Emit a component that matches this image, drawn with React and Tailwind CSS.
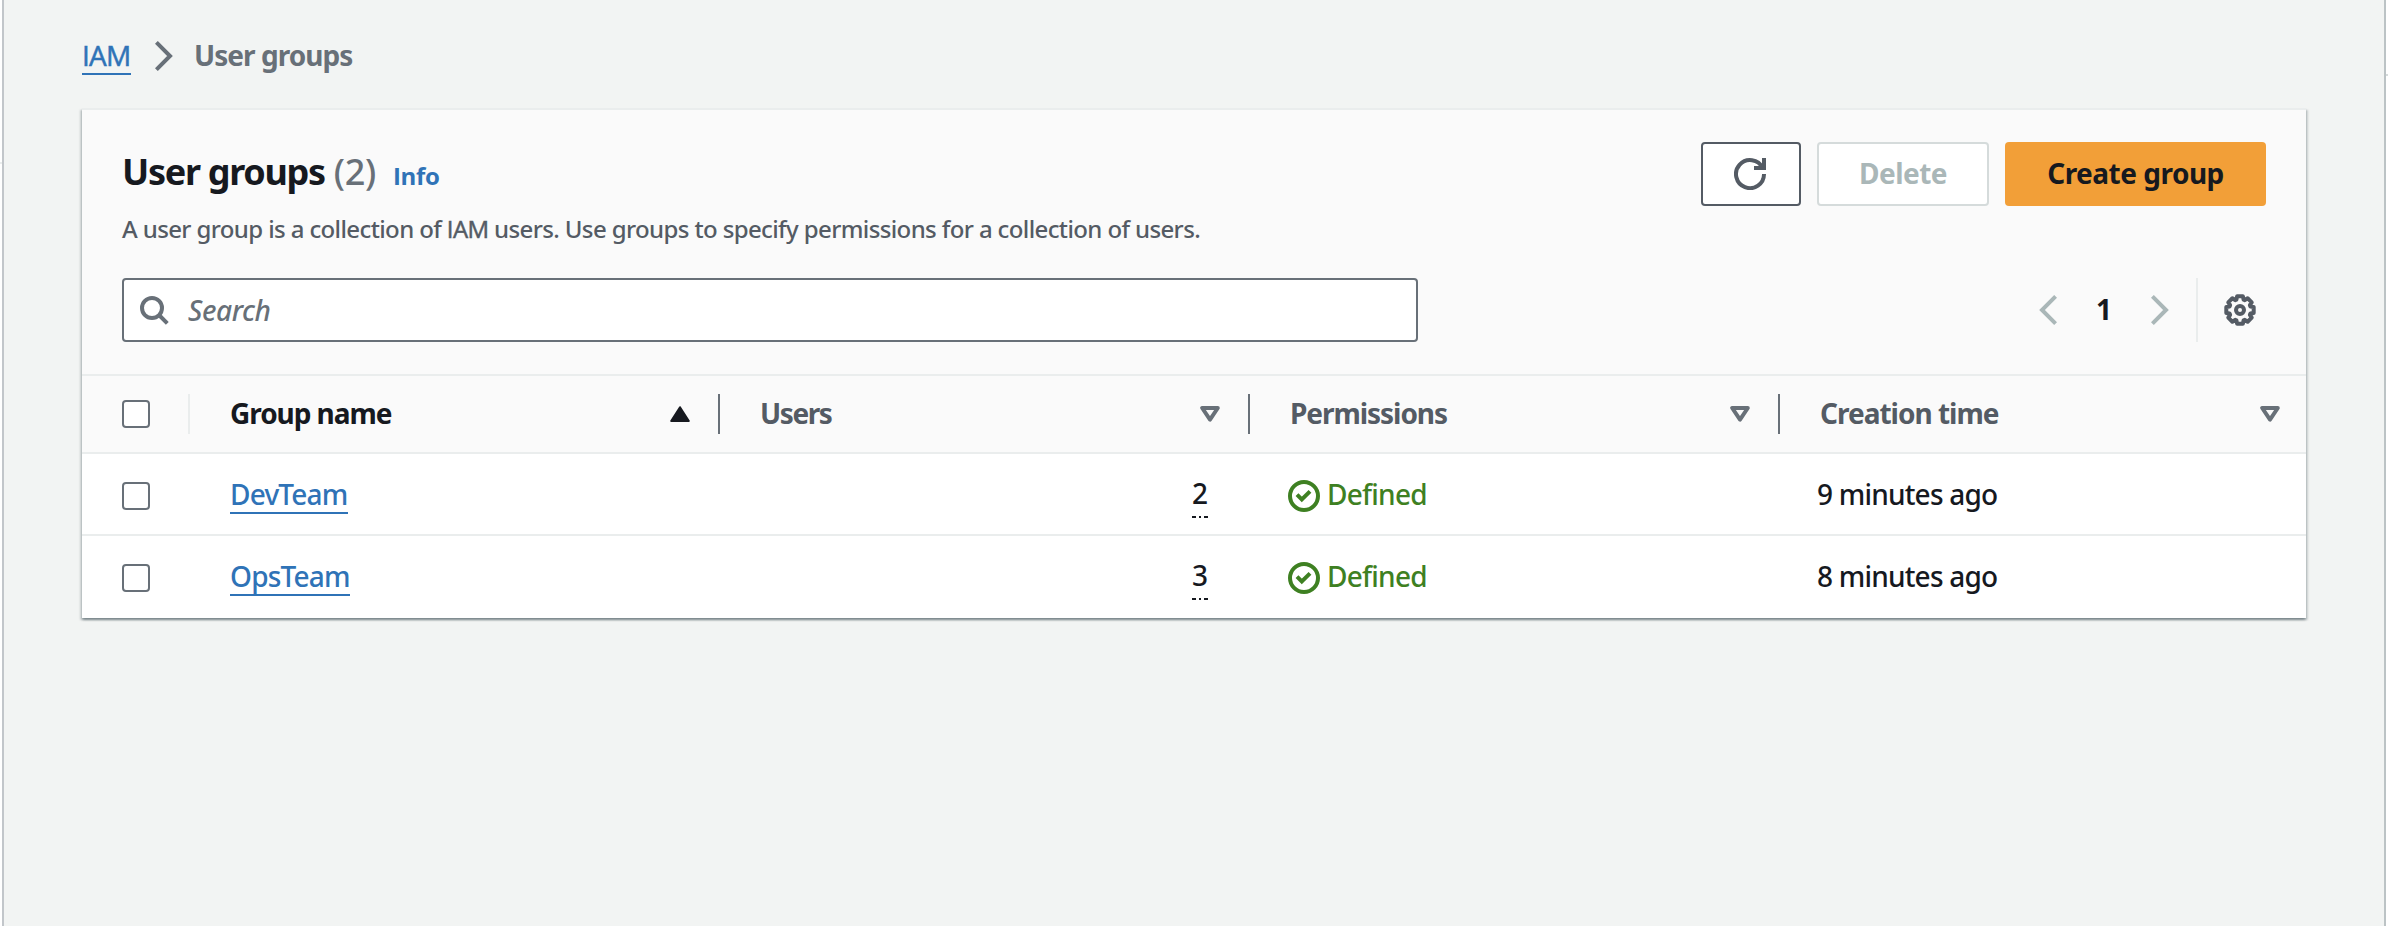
const columns = [
  { label: "Group name", sorted: true, track: "tracking-[-1.05px]" },
  { label: "Users", track: "tracking-[-1.4px]" },
  { label: "Permissions", track: "tracking-[-1.05px]" },
  { label: "Creation time", track: "tracking-[-1px]", last: true },
];

const groups = [
  { name: "DevTeam", users: 2, created: "9 minutes ago" },
  { name: "OpsTeam", users: 3, created: "8 minutes ago" },
];

const gearPoints = Array.from({ length: 8 }, (_, k) =>
  [[-19, 5.5], [-12, 7], [12, 7], [19, 5.5]].map(([offset, r]) => {
    const a = ((k * 45 + offset) * Math.PI) / 180;
    return `${(8 + r * Math.cos(a)).toFixed(2)},${(8 + r * Math.sin(a)).toFixed(2)}`;
  }).join(" ")
).join(" ");

function Chevron({ className = "", left = false }) {
  return (
    <svg viewBox="0 0 18 30" className={`h-[30px] w-[18px] shrink-0 ${className}`} fill="none" stroke="currentColor" strokeWidth="4">
      <path d={left ? "M16.6 1.4 3 15l13.6 13.6" : "M1.4 1.4 15 15 1.4 28.6"} />
    </svg>
  );
}

function RefreshIcon() {
  return (
    <svg viewBox="0 0 16 16" className="mr-[2px] size-8" fill="none" stroke="currentColor" strokeWidth="2">
      <path d="M10 5h5V0" />
      <path d="M15 8a7 7 0 1 1-.7-3" />
    </svg>
  );
}

function GearIcon() {
  return (
    <svg viewBox="0 0 16 16" className="size-8" fill="none" stroke="currentColor" strokeWidth="2" strokeLinejoin="round">
      <polygon points={gearPoints} />
      <circle cx="8" cy="8" r="2" />
    </svg>
  );
}

function SearchIcon() {
  return (
    <svg viewBox="0 0 32 32" className="size-8 text-[#687078]" fill="none" stroke="currentColor" strokeWidth="4">
      <circle cx="14" cy="14" r="10" />
      <path d="m20.5 20.5 8.8 8.8" />
    </svg>
  );
}

function SortIcon({ filled }) {
  return filled ? (
    <svg viewBox="0 0 20 16" className="h-4 w-5" fill="currentColor" stroke="currentColor" strokeWidth="2" strokeLinejoin="round">
      <path d="M10 1.2 18.8 15H1.2z" />
    </svg>
  ) : (
    <svg viewBox="0 0 20 16" className="h-4 w-5 text-[#687078]" fill="none" stroke="currentColor" strokeWidth="4" strokeLinejoin="round">
      <path d="M2.2 2h15.6L10 13.6z" />
    </svg>
  );
}

function CheckIcon() {
  return (
    <svg viewBox="0 0 16 16" className="size-8" fill="none" stroke="currentColor" strokeWidth="2">
      <circle cx="8" cy="8" r="7" />
      <path d="M4.5 7.3 6.9 9.7 11 5.7" />
    </svg>
  );
}

function Checkbox({ className = "" }) {
  return <span role="checkbox" aria-checked="false" className={`size-7 rounded-[4px] border-2 border-[#687078] bg-white ${className}`} />;
}

export default function App() {
  return (
    <div className="flex h-[926px] w-[2388px] overflow-hidden bg-white font-['Noto_Sans',sans-serif] text-[28px] leading-9 font-medium text-[#16191f]">
      <div className="w-[2px] pt-[162px]">
        <div className="h-[2px] bg-[#eaeded]" />
      </div>
      <main className="w-[2384px] border-x-2 border-l-[#c2c6ca] border-r-[#bcc3c5] bg-[#f2f4f3] pl-[78px]">
        <nav className="flex h-[108px] items-start pt-[37px]">
          <a className="h-[38px] w-[49px] border-b-2 border-[#2f73b7] font-['Open_Sans',sans-serif] leading-9 tracking-[-0.8px] text-[#2f73b7] [-webkit-text-stroke:0.5px]">IAM</a>
          <Chevron className="mt-1 ml-6 text-[#687078]" />
          <span className="ml-[21px] font-bold tracking-[-0.95px] text-[#687078]">User groups</span>
        </nav>

        <section className="w-[2224px] border-t-2 border-[#eaeded] bg-white shadow-[0_2px_2px_0_rgba(0,28,36,0.3),2px_2px_2px_0_rgba(0,28,36,0.15),-2px_2px_2px_0_rgba(0,28,36,0.15)]">
          <div className="h-[266px] border-b-2 border-[#eaeded] bg-[#fafafa] px-10">
            <div className="flex h-[168px] justify-between">
              <div className="pt-10">
                <div className="flex h-11 items-baseline leading-[44px]">
                  <h1 className="text-[36px] font-bold tracking-[-1.3px]">User groups</h1>
                  <span className="ml-[9px] text-[36px] tracking-[-0.3px] text-[#687078]">(2)</span>
                  <a className="ml-[17px] font-['Open_Sans',sans-serif] text-[24px] font-bold tracking-[-0.3px] text-[#2f73b7]">Info</a>
                </div>
                <p className="mt-[19px] text-[24px] leading-8 tracking-[-0.62px] text-[#545b64]">
                  A user group is a collection of <span className="font-['Open_Sans',sans-serif] [-webkit-text-stroke:0.5px]">IAM</span> users. Use groups to specify permissions for a collection of users.
                </p>
              </div>
              <div className="flex gap-4 pt-8 font-bold">
                <button className="flex h-16 w-[100px] items-center justify-center rounded-[4px] border-2 border-[#545b64] bg-white text-[#545b64]">
                  <RefreshIcon />
                </button>
                <button className="h-16 w-[172px] rounded-[4px] border-2 border-[#d5dbdb] bg-white pb-[2px] tracking-[-0.5px] text-[#aab7b8]">
                  Delete
                </button>
                <button className="h-16 w-[261px] rounded-[4px] bg-[#f29f38] pb-[2px] tracking-[-0.5px]">Create group</button>
              </div>
            </div>
            <div className="flex h-16 items-center">
              <div className="flex h-16 w-[1296px] items-center rounded-[4px] border-2 border-[#687078] bg-white pl-[14px]">
                <SearchIcon />
                <span className="ml-[18px] tracking-[-0.4px] text-[#687078] italic">Search</span>
              </div>
              <div className="ml-auto flex h-16 items-center">
                <Chevron left className="text-[#aab7b8]" />
                <span className="w-[94px] pb-[2px] text-center font-bold">1</span>
                <Chevron className="text-[#aab7b8]" />
                <span className="ml-[27px] h-16 w-[2px] bg-[#eaeded]" />
                <span className="mr-[10px] ml-[26px] text-[#545b64]">
                  <GearIcon />
                </span>
              </div>
            </div>
          </div>

          <div className="flex h-[78px] items-center border-b-2 border-[#eaeded] bg-[#fafafa] font-bold">
            <div className="flex h-10 w-[108px] items-center border-r-2 border-[#eaeded] pl-10">
              <Checkbox />
            </div>
            {columns.map((c) => (
              <div
                key={c.label}
                className={`flex h-10 items-center justify-between pl-10 ${c.last ? "w-[526px] pr-[26px] text-[#545b64]" : "w-[530px] border-r-2 border-[#687078] pr-7"}`}
              >
                <span className={`pb-[2px] ${c.track} ${c.sorted ? "text-[#16191f]" : "text-[#545b64]"}`}>{c.label}</span>
                <SortIcon filled={c.sorted} />
              </div>
            ))}
          </div>

          {groups.map((g) => (
            <div key={g.name} className="flex h-[82px] items-start border-b-2 border-[#eaeded] last:border-white">
              <div className="flex w-[148px] pt-7 pl-10">
                <Checkbox />
              </div>
              <div className="flex w-[530px] pt-[22px]">
                <a className="h-[38px] border-b-2 border-[#2f73b7] leading-9 tracking-[-0.8px] text-[#2f73b7]">{g.name}</a>
              </div>
              <div className="flex w-[448px] flex-col items-end pt-[21px]">
                <span className="h-[41px]">{g.users}</span>
                <span className="flex h-[2px] w-4 justify-between">
                  <i className="w-1 bg-[#16191f]" />
                  <i className="w-[2px] bg-[#16191f]" />
                  <i className="w-1 bg-[#16191f]" />
                </span>
              </div>
              <div className="flex w-[530px] pt-[22px] pl-20 text-[#3e8022]">
                <span className="pt-1">
                  <CheckIcon />
                </span>
                <span className="ml-[7px] tracking-[-0.75px]">Defined</span>
              </div>
              <div className="pt-[22px] pl-[79px] tracking-[-0.8px]">{g.created}</div>
            </div>
          ))}
        </section>
      </main>
      <div className="w-[2px] pt-[74px]">
        <div className="h-[2px] bg-[#d5dbdb]" />
      </div>
    </div>
  );
}
